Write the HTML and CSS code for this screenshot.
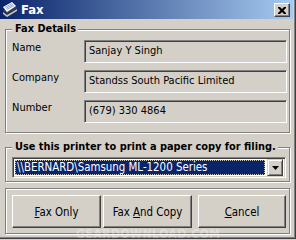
FILE: index.html
```html
<!DOCTYPE html>
<html lang="en">
<head>
  <meta charset="UTF-8">
  <title>Fax</title>
  <link rel="stylesheet" href="styles.css">
</head>
<body>
  <div class="window">
    <div class="titlebar">
      <svg class="app-icon" width="16" height="16" viewBox="0 0 16 16">
        <path d="M1 9 L11 3 L15 7 L5 13 Z" fill="#404040"/>
        <path d="M1 6 L10 1 L14 5 L5 11 Z" fill="#fff"/>
        <path d="M3 6.5 L10 2.5 M4 7.5 L11 3.5 M5 8.5 L12 4.5" stroke="#6a8ccf" stroke-width="0.8"/>
        <path d="M1 11 L5 14 L15 8 L15 10 L5 16 L1 13 Z" fill="#c0c0c0"/>
      </svg>
      <span class="title">Fax</span>
      <span class="close">
        <svg width="8" height="7" viewBox="0 0 8 7">
          <path d="M0 0h2l2 2 2-2h2v1l-2.5 2.5 2.5 2.5v1h-2l-2-2-2 2h-2v-1l2.5-2.5-2.5-2.5z" fill="#000"/>
        </svg>
      </span>
    </div>

    <div class="content">
      <fieldset class="group details">
        <legend>Fax Details</legend>
        <div class="row">
          <span class="label">Name</span>
          <div class="field">Sanjay Y Singh</div>
        </div>
        <div class="row">
          <span class="label">Company</span>
          <div class="field">Standss South Pacific Limited</div>
        </div>
        <div class="row">
          <span class="label">Number</span>
          <div class="field">(679) 330 4864</div>
        </div>
      </fieldset>

      <fieldset class="group printer">
        <legend>Use this printer to print a paper copy for filing.</legend>
        <div class="combo">
          <div class="combo-value"><span>\\BERNARD\Samsung ML-1200 Series</span></div>
          <div class="combo-btn">
            <svg width="7" height="4" viewBox="0 0 7 4"><path d="M0 0h7L3.5 4z" fill="#000"/></svg>
          </div>
        </div>
      </fieldset>

      <fieldset class="group actions">
        <button class="btn only"><u>F</u>ax Only</button>
        <button class="btn copy">Fax <u>A</u>nd Copy</button>
        <button class="btn cancel"><u>C</u>ancel</button>
      </fieldset>
    </div>

    <div class="watermark">GEARDOWNLOAD.COM</div>
  </div>
</body>
</html>
```

FILE: styles.css
```css
:root {
  --face: #d4d0c8;
  --shadow: #808080;
  --dark: #404040;
  --light: #fff;
  --select: #0a246a;
}
* { box-sizing: border-box; margin: 0; padding: 0 }
body {
  width: 296px; height: 240px; overflow: hidden;
  background: var(--face); color: #000;
  font-family: "DejaVu Sans Condensed", "DejaVu Sans", sans-serif;
  font-stretch: condensed;
  font-size: 11px;
}
.window {
  position: relative;
  height: 239px;
  border-right: 1px solid var(--dark);
  border-bottom: 1px solid var(--dark);
  box-shadow: inset -1px -1px 0 var(--shadow);
  padding-right: 2px;
}
.titlebar {
  height: 19px;
  display: flex; align-items: flex-start;
  padding: 0 3px 0 2px;
  background: linear-gradient(to right, #0a246a, #a6caf0);
}
.app-icon { margin-top: 1px; }
.title {
  color: var(--light);
  font-weight: bold; font-size: 13px;
  line-height: 19px;
  margin-left: 3px;
  flex: 1;
}
.close {
  width: 16px; height: 14px; margin-top: 3px;
  background: var(--face);
  border-top: 1px solid var(--light); border-left: 1px solid var(--light);
  border-right: 1px solid var(--dark); border-bottom: 1px solid var(--dark);
  box-shadow: inset -1px -1px 0 var(--shadow);
  display: flex; align-items: center; justify-content: center;
}
.content {
  padding: 3px 0 0 5px;
  display: flex; flex-direction: column;
}
.group {
  width: 285px;
  border: 1px solid var(--shadow);
  box-shadow: inset 1px 1px 0 var(--light), 1px 1px 0 var(--light);
  padding: 0 2px 0 6px;
}
.group legend {
  font-weight: bold; font-size: 10.9px;
  line-height: 14px;
  white-space: nowrap;
  padding: 0 2px 0 3px;
  background: var(--face);
}
.details { height: 111px; padding-top: 4px; }
.printer { height: 42px; margin-top: 7px; padding-top: 3px; }
.actions { height: 46px; margin-top: 6px; padding-top: 6px; display: flex; }
.row { display: flex; height: 23px; margin-bottom: 7px; }
.label { width: 72px; line-height: 14px; padding-top: 1px; }
.field {
  width: 203px;
  border-top: 1px solid var(--shadow); border-left: 1px solid var(--shadow);
  border-right: 1px solid var(--light); border-bottom: 1px solid var(--light);
  box-shadow: inset 1px 1px 0 var(--dark);
  padding: 3px 0 0 4px;
  line-height: 14px;
}
.combo {
  display: flex; align-items: center;
  width: 274px; height: 21px;
  background: var(--light);
  border-top: 1px solid var(--shadow); border-left: 1px solid var(--shadow);
  border-right: 1px solid var(--light); border-bottom: 1px solid var(--light);
  box-shadow: inset 1px 1px 0 var(--dark), inset -1px -1px 0 var(--face);
  padding: 1px 2px 1px 2px;
}
.combo-value {
  flex: 1; height: 15px;
  margin-right: 2px;
  background: var(--select); color: var(--light);
  outline: 1px dotted #c8c8c0; outline-offset: -1px;
  line-height: 15px; padding-left: 2px;
  font-size: 11.4px;
}
.combo-btn {
  width: 16px; height: 17px;
  background: var(--face);
  border-top: 1px solid var(--face); border-left: 1px solid var(--face);
  border-right: 1px solid var(--dark); border-bottom: 1px solid var(--dark);
  box-shadow: inset 1px 1px 0 var(--light), inset -1px -1px 0 var(--shadow);
  display: flex; align-items: center; justify-content: center;
}
.btn {
  height: 33px;
  font: inherit; color: #000;
  background: var(--face);
  border-top: 1px solid var(--light); border-left: 1px solid var(--light);
  border-right: 1px solid var(--dark); border-bottom: 1px solid var(--dark);
  box-shadow: inset -1px -1px 0 var(--shadow);
  font-size: 11.4px;
}
.only { width: 89px; }
.copy { width: 89px; margin-left: 2px; }
.cancel { width: 88px; margin-left: 6px; }
.watermark {
  position: absolute; left: 76px; top: 227px;
  font-family: "DejaVu Sans", sans-serif; font-weight: bold;
  font-size: 12px; letter-spacing: 0.5px;
  color: rgba(255,255,255,0.3);
}
```
